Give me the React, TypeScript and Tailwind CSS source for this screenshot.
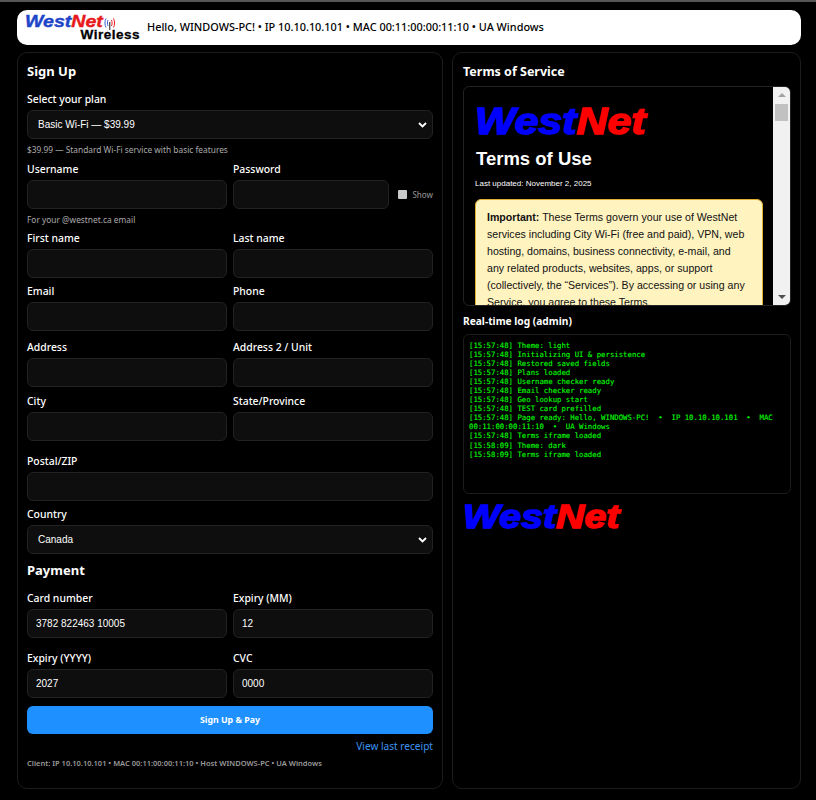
const Logo = ({ size }: { size: string }) => (
  <div className={size}>
    <span className="text-[#0000ff]">West</span>
    <span className="text-[#ff0000]">Net</span>
  </div>
)

const inputCls =
  "w-full h-[29px] px-2 bg-[#0e0e0e] border border-[#222] rounded-md text-[10px] text-white font-['Liberation_Sans',sans-serif] outline-none"

const Label = ({ children }: { children: string }) => (
  <label className="block h-4 mb-[3px] text-[10.4px] leading-4 font-medium text-white">{children}</label>
)

const Field = ({ label, value }: { label: string; value?: string }) => (
  <div>
    <Label>{label}</Label>
    <input readOnly value={value || ""} className={inputCls} />
  </div>
)

const Select = ({ value }: { value: string }) => (
  <div className="relative">
    <select
      value={value}
      onChange={() => {}}
      className="block w-full h-[29px] pl-[10px] pr-6 appearance-none bg-[#0e0e0e] border border-[#222] rounded-md text-[10px] text-white font-['Liberation_Sans',sans-serif] outline-none"
    >
      <option>{value}</option>
    </select>
    <svg width="9" height="6" viewBox="0 0 9 6" fill="none" className="absolute right-[6px] top-[12px]">
      <path d="M1 1L4.5 4.5L8 1" stroke="white" strokeWidth="1.8" />
    </svg>
  </div>
)

const logLines = [
  "[15:57:48] Theme: light",
  "[15:57:48] Initializing UI & persistence",
  "[15:57:48] Restored saved fields",
  "[15:57:48] Plans loaded",
  "[15:57:48] Username checker ready",
  "[15:57:48] Email checker ready",
  "[15:57:48] Geo lookup start",
  "[15:57:48] TEST card prefilled",
  "[15:57:48] Page ready: Hello, WINDOWS-PC!  •  IP 10.10.10.101  •  MAC 00:11:00:00:11:10  •  UA Windows",
  "[15:57:48] Terms iframe loaded",
  "[15:58:09] Theme: dark",
  "[15:58:09] Terms iframe loaded",
]

const App = () => {
  return (
    <div className="min-h-[800px] bg-black border-t-2 border-[#555] font-['Noto_Sans',sans-serif] text-white">
      <div className="pt-2 pr-[15px] pl-[17px]">
        {/* header */}
        <div className="flex items-center h-[35px] bg-white rounded-[10px] pl-2 text-black">
          <div className="flex flex-col w-[115px] h-[30px] font-['Liberation_Sans',sans-serif] font-bold">
            <div className="flex items-center h-[17px]">
              <div className="text-[17px] leading-[17px] italic origin-left scale-x-[1.15] [-webkit-text-stroke:0.4px_currentColor]">
                <span className="text-[#1d45c9]">West</span>
                <span className="text-[#e8191c]">Net</span>
              </div>
              <svg width="14" height="14" viewBox="0 0 14 14" fill="none" className="ml-[10px] mt-1">
                <path d="M3 2.5C1.6 5 1.6 9 3 11.5" stroke="#3a5fd0" strokeWidth="1" />
                <path d="M5 4C4.2 6 4.2 8 5 10" stroke="#3a5fd0" strokeWidth="1" />
                <path d="M8.5 4C9.3 6 9.3 8 8.5 10" stroke="#e8191c" strokeWidth="1" />
                <path d="M10.5 2.5C11.9 5 11.9 9 10.5 11.5" stroke="#e8191c" strokeWidth="1" />
                <path d="M6.8 6V14" stroke="#111" strokeWidth="1" />
              </svg>
            </div>
            <div className="-mt-[2px] self-end text-[13.5px] leading-[13px] tracking-[0.5px] [-webkit-text-stroke:0.3px_currentColor]">Wireless</div>
          </div>
          <div className="ml-[7px] text-[10.9px] font-medium">
            Hello, WINDOWS-PC! • IP 10.10.10.101 • MAC 00:11:00:00:11:10 • UA Windows
          </div>
        </div>

        <div className="flex gap-[9px] mt-[7px]">
          {/* sign up */}
          <div className="w-[426px] h-[737px] border border-[#1c1c1c] rounded-[10px] px-[9px] pt-[9px]">
            <h2 className="text-[13px] leading-[18px] font-bold">Sign Up</h2>

            <div className="mt-[11px]">
              <Label>Select your plan</Label>
              <Select value="Basic Wi-Fi — $39.99" />
            </div>
            <p className="mt-[6px] text-[8.35px] leading-[10px] text-[#aaa]">$39.99 — Standard Wi-Fi service with basic features</p>

            <div className="grid grid-cols-2 gap-x-[6px] mt-[6px]">
              <Field label="Username" />
              <div>
                <Label>Password</Label>
                <div className="flex items-center">
                  <input readOnly value="" className={`${inputCls} !w-[157px]`} />
                  <input type="checkbox" readOnly className="appearance-none w-[9px] h-[9px] ml-[9px] bg-[#c9c9c9] rounded-[1px]" />
                  <span className="ml-[5px] text-[8px] font-medium text-[#888]">Show</span>
                </div>
              </div>
            </div>
            <p className="mt-[6px] text-[8.35px] leading-[10px] text-[#aaa]">For your @westnet.ca email</p>

            <div className="grid grid-cols-2 gap-x-[6px] mt-[5px]">
              <Field label="First name" />
              <Field label="Last name" />
            </div>
            <div className="grid grid-cols-2 gap-x-[6px] mt-[5px]">
              <Field label="Email" />
              <Field label="Phone" />
            </div>
            <div className="grid grid-cols-2 gap-x-[6px] mt-2">
              <Field label="Address" />
              <Field label="Address 2 / Unit" />
            </div>
            <div className="grid grid-cols-2 gap-x-[6px] mt-[6px]">
              <Field label="City" />
              <Field label="State/Province" />
            </div>
            <div className="mt-3">
              <Field label="Postal/ZIP" />
            </div>
            <div className="mt-[5px]">
              <Label>Country</Label>
              <Select value="Canada" />
            </div>

            <h2 className="mt-[7px] text-[13px] leading-[18px] font-bold">Payment</h2>
            <div className="grid grid-cols-2 gap-x-[6px] mt-[11px]">
              <Field label="Card number" value="3782 822463 10005" />
              <Field label="Expiry (MM)" value="12" />
            </div>
            <div className="grid grid-cols-2 gap-x-[6px] mt-3">
              <Field label="Expiry (YYYY)" value="2027" />
              <Field label="CVC" value="0000" />
            </div>

            <button className="block w-full h-7 pt-px mt-2 bg-[#1e90ff] rounded-md text-[8.8px] font-bold text-white">Sign Up &amp; Pay</button>
            <div className="mt-[5px] text-right text-[10.1px] leading-[14px] text-[#3d93f0]">View last receipt</div>
            <p className="mt-[5px] text-[7.5px] leading-[10px] font-semibold text-[#999]">
              Client: IP 10.10.10.101 • MAC 00:11:00:00:11:10 • Host WINDOWS-PC • UA Windows
            </p>
          </div>

          {/* right column */}
          <div className="flex-1 h-[737px] border border-[#1c1c1c] rounded-[10px] pl-[10px] pr-[9px] pt-[10px]">
            <h2 className="text-[12.5px] leading-[18px] font-bold">Terms of Service</h2>
            <div className="flex mt-[5px] h-[220px] border border-[#222] rounded-md overflow-hidden font-['Liberation_Sans',sans-serif]">
              <div className="flex-1 overflow-hidden pl-[11px] pr-[10px] pt-[13px]">
                <Logo size="text-[36px] leading-[44px] font-bold italic origin-left scale-x-[1.19] [-webkit-text-stroke:1.4px_currentColor]" />
                <h1 className="mt-[3px] ml-px text-[18.5px] leading-6 font-bold">Terms of Use</h1>
                <p className="mt-[8px] text-[8px] leading-[10px] font-medium">Last updated: November 2, 2025</p>
                <div className="mt-[10px] bg-[#fff3c0] border border-[#e0b030] rounded-md pl-[11px] pr-[14px] pt-[9px] pb-3 text-[10.6px] leading-[17px] text-[#111]">
                  <b>Important:</b> These Terms govern your use of WestNet services including City Wi-Fi (free and paid), VPN, web hosting, domains, business connectivity, e-mail, and any related products, websites, apps, or support (collectively, the “Services”). By accessing or using any Service, you agree to these Terms.
                </div>
              </div>
              <div className="flex flex-col items-center w-[17px] bg-[#f1f1f1] py-[6px]">
                <div className="w-0 h-0 border-x-[4px] border-x-transparent border-b-[4px] border-b-[#a3a3a3]" />
                <div className="w-[13px] h-[17px] mt-[7px] bg-[#c1c1c1]" />
                <div className="flex-1" />
                <div className="w-0 h-0 border-x-[4px] border-x-transparent border-t-[4px] border-t-[#505050]" />
              </div>
            </div>
            <h3 className="mt-[7px] text-[10.2px] leading-4 font-bold">Real-time log (admin)</h3>
            <div className="mt-[5px] h-[160px] border border-[#1c1c1c] rounded-md px-[5px] pt-[6px] font-['DejaVu_Sans_Mono',monospace] text-[7.32px] leading-[9.05px] text-[#00ff00] [-webkit-text-stroke:0.1px_currentColor] whitespace-pre-wrap">
              {logLines.map((line, i) => (
                <div key={i}>{line}</div>
              ))}
            </div>
            <div className="mt-[7px] font-['Liberation_Sans',sans-serif]">
              <Logo size="text-[33px] leading-[32px] font-bold italic origin-left scale-x-[1.19] [-webkit-text-stroke:1.4px_currentColor]" />
            </div>
          </div>
        </div>
      </div>
    </div>
  )
}
export default App
